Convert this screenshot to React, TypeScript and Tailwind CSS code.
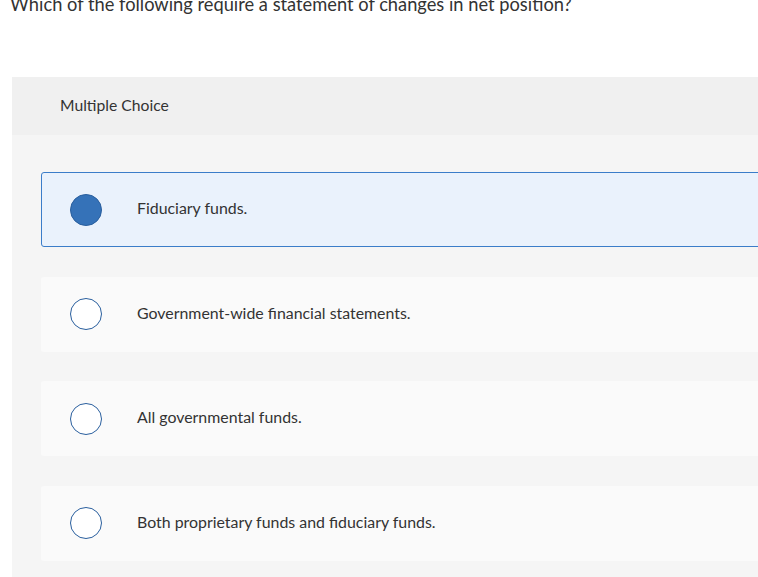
import React from "react";

const options = [
  "Fiduciary funds.",
  "Government-wide financial statements.",
  "All governmental funds.",
  "Both proprietary funds and fiduciary funds.",
];

export default function App() {
  const selected = 0;
  return (
    <div
      className="w-[758px] h-[577px] overflow-hidden bg-white text-[#333333]"
      style={{ fontFamily: "Lato, 'Open Sans', sans-serif" }}
    >
      <p className="pl-[10px] mt-[-7px] text-[18.3px] leading-[22px] whitespace-nowrap">
        Which of the following require a statement of changes in net position?
      </p>
      <div className="ml-[12px] mt-[62px] w-[800px]">
        <div className="h-[58px] bg-[#f0f0f0] flex items-center pl-[48px] pb-[1px] text-[15.7px]">
          Multiple Choice
        </div>
        <div className="bg-[#f5f5f5] pl-[29px] pt-[37px] pb-[20px] flex flex-col gap-[29.5px]">
          {options.map((o, i) => (
            <div
              key={i}
              className={
                i === selected
                  ? "h-[75px] rounded-[3px] border border-[#3b7dc9] bg-[#eaf2fc] flex items-center pl-[28px]"
                  : "h-[75px] rounded-[3px] border border-transparent bg-[#fafafa] flex items-center pl-[28px]"
              }
            >
              <span
                className={
                  i === selected
                    ? "block shrink-0 w-[32px] h-[32px] rounded-full bg-[#3572b8] border border-[#2a5f9e]"
                    : "block shrink-0 w-[32px] h-[32px] rounded-full bg-white border-[1.5px] border-[#2a5f9e]"
                }
              />
              <span className="ml-[35px] mb-[3px] text-[15.9px]">{o}</span>
            </div>
          ))}
        </div>
      </div>
    </div>
  );
}
